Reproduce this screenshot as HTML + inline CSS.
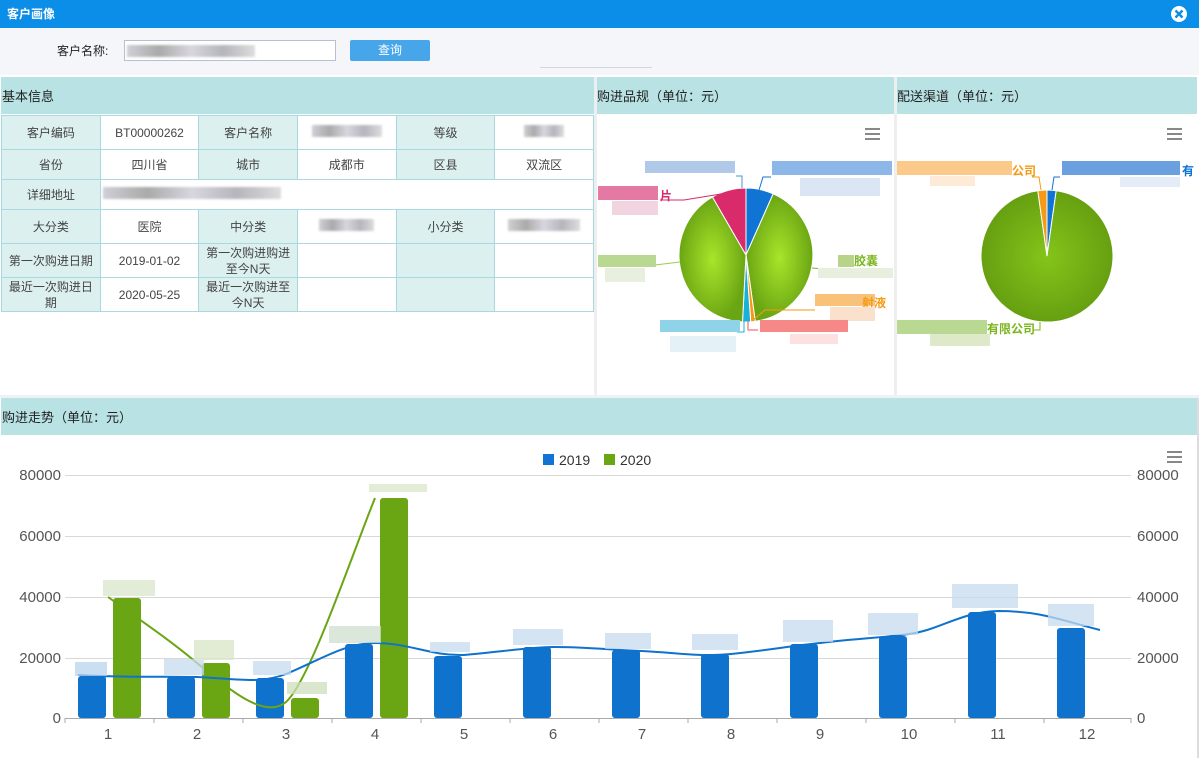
<!DOCTYPE html>
<html><head><meta charset="utf-8"><style>
*{margin:0;padding:0;box-sizing:border-box}
body{width:1199px;height:758px;overflow:hidden;background:#fff;font-family:"Liberation Sans","Noto Sans CJK SC",sans-serif;font-size:12px;color:#333;position:relative}
.abs{position:absolute}
.top{left:0;top:0;width:1199px;height:28px;background:#0b8ee8;color:#fff;font-weight:bold;font-size:12px;line-height:28px;padding-left:7px}
.search{left:0;top:28px;width:1199px;height:47px;background:#f5f6f9}
.hdr{background:#b8e2e3;height:37px;line-height:40px;font-size:13px;color:#222}
table{border-collapse:collapse;position:absolute;left:1px;top:115px;width:593px}
td{border:1px solid #a9d9e0;text-align:center;font-size:12px;color:#444;padding:0 2px;line-height:16px}
td.l{background:#ddf0f0;width:98px}
td.v{width:98px}
.blur{display:inline-block;background:linear-gradient(90deg,#cfcfd6,#aaa,#d8d6de,#b5b5bc,#ddd);filter:blur(1px);height:12px}
</style></head><body>
<div class="abs top">客户画像</div>
<svg class="abs" style="left:1170px;top:5px" width="18" height="18"><circle cx="9" cy="9" r="8" fill="#fff"/><path d="M5.5 5.5L12.5 12.5M12.5 5.5L5.5 12.5" stroke="#0b8ee8" stroke-width="2.4"/></svg>
<div class="abs search"></div>
<div class="abs" style="left:57px;top:42px;font-size:12px;color:#222">客户名称:</div>
<div class="abs" style="left:124px;top:40px;width:212px;height:21px;border:1px solid #b9bfd0;background:#fff"><span class="blur" style="width:128px;margin:4px 0 0 2px"></span></div>
<div class="abs" style="left:350px;top:40px;width:80px;height:21px;background:#47a6ea;border-radius:2px;color:#fff;text-align:center;line-height:21px">查询</div>
<div class="abs" style="left:540px;top:67px;width:112px;height:8px;border-top:1px solid #d4d6dc"></div>
<div class="abs hdr" style="left:1px;top:77px;width:593px;padding-left:1px">基本信息</div>
<div class="abs hdr" style="left:597px;top:77px;width:297px">购进品规（单位：元）</div>
<div class="abs hdr" style="left:897px;top:77px;width:300px">配送渠道（单位：元）</div>
<div class="abs" style="left:594px;top:77px;width:3px;height:320px;background:#eee"></div>
<div class="abs" style="left:894px;top:77px;width:3px;height:320px;background:#eee"></div>
<table>
<tr style="height:34px"><td class="l">客户编码</td><td class="v">BT00000262</td><td class="l">客户名称</td><td class="v" style="background:#fff"><span class="blur" style="width:70px"></span></td><td class="l">等级</td><td class="v"><span class="blur" style="width:40px"></span></td></tr>
<tr style="height:30px"><td class="l">省份</td><td>四川省</td><td class="l">城市</td><td>成都市</td><td class="l">区县</td><td>双流区</td></tr>
<tr style="height:30px"><td class="l">详细地址</td><td colspan="5" style="text-align:left"><span class="blur" style="width:178px"></span></td></tr>
<tr style="height:34px"><td class="l">大分类</td><td>医院</td><td class="l">中分类</td><td><span class="blur" style="width:55px"></span></td><td class="l">小分类</td><td><span class="blur" style="width:72px"></span></td></tr>
<tr style="height:34px"><td class="l">第一次购进日期</td><td>2019-01-02</td><td class="l">第一次购进购进至今N天</td><td></td><td class="l"></td><td></td></tr>
<tr style="height:34px"><td class="l">最近一次购进日期</td><td>2020-05-25</td><td class="l">最近一次购进至今N天</td><td></td><td class="l"></td><td></td></tr>
</table>
<svg class="abs" style="left:0;top:0" width="1199" height="400">
<defs>
<radialGradient id="g1" cx="0.5" cy="0.5" r="0.5"><stop offset="0" stop-color="#a8e52a"/><stop offset="1" stop-color="#6aa513"/></radialGradient>
<radialGradient id="g2" cx="0.5" cy="0.5" r="0.5"><stop offset="0" stop-color="#85c41a"/><stop offset="1" stop-color="#66a011"/></radialGradient>
</defs>
<g stroke="#fff" stroke-width="1">
<path d="M746 255L746 188A67 67 0 0 1 773.2 193.8Z" fill="#0f74d4"/>
<path d="M746 255L773.2 193.8A67 67 0 0 1 755.3 321.3Z" fill="url(#g1)"/>
<path d="M746 255L755.3 321.3A67 67 0 0 1 750.7 321.9Z" fill="#f59a14"/>
<path d="M746 255L750.7 321.9A67 67 0 0 1 742.5 321.9Z" fill="#1ab0d8"/>
<path d="M746 255L742.5 321.9A67 67 0 0 1 712.5 197Z" fill="url(#g1)"/>
<path d="M746 255L712.5 197A67 67 0 0 1 746 188Z" fill="#d92a6b"/>
<path d="M1047 256L1047 190A66 66 0 0 1 1056.2 190.7Z" fill="#0f74d4"/>
<path d="M1047 256L1056.2 190.7A66 66 0 1 1 1037.8 190.7Z" fill="url(#g2)"/>
<path d="M1047 256L1037.8 190.7A66 66 0 0 1 1047 190Z" fill="#f59a14"/>
</g>
<g fill="none" stroke-width="1">
<path d="M759 190L763 177H771" stroke="#0f74d4"/><path d="M742 188V176H736" stroke="#4a90d9"/>
<path d="M727 193L684 200H660" stroke="#d92a6b"/><path d="M812 268L838 270" stroke="#7ab51d"/>
<path d="M680 262L655 265" stroke="#9ccc4a"/><path d="M752 321L765 310H815" stroke="#f59a14"/>
<path d="M748 321V330H758" stroke="#f05050"/><path d="M744 321V332H737" stroke="#1ab0d8"/>
<path d="M1052 190L1054 177H1060" stroke="#0f74d4"/><path d="M1041 190L1039 177H1032" stroke="#f59a14"/>
<path d="M1040 322V330H1034" stroke="#7ab51d"/>
</g>
<g font-size="12" font-weight="bold">
<rect x="645" y="161" width="90" height="12" fill="#8fb2e0" opacity=".7"/><rect x="772" y="161" width="120" height="14" fill="#5c97e0" opacity=".7"/>
<rect x="800" y="178" width="80" height="18" fill="#dbe6f5"/>
<rect x="598" y="186" width="60" height="14" fill="#e47aa3"/><text x="660" y="200" fill="#d92a6b">片</text>
<rect x="612" y="201" width="46" height="14" fill="#f2d4e0"/>
<rect x="598" y="255" width="58" height="12" fill="#b9d892"/><rect x="605" y="268" width="40" height="14" fill="#e8efde"/>
<rect x="838" y="255" width="16" height="12" fill="#b8d48a"/><text x="854" y="265" fill="#7ab51d">胶囊</text>
<rect x="818" y="268" width="75" height="10" fill="#e8efde"/>
<rect x="815" y="294" width="60" height="12" fill="#f8c27a"/><text x="862" y="307" fill="#f59a14">射液</text>
<rect x="830" y="307" width="45" height="14" fill="#fbe0cc"/>
<rect x="760" y="320" width="88" height="12" fill="#f68888"/><rect x="790" y="334" width="48" height="10" fill="#fde0e0"/>
<rect x="660" y="320" width="80" height="12" fill="#8fd3e8"/><rect x="670" y="336" width="66" height="16" fill="#e4f2f8"/>
<rect x="897" y="161" width="115" height="14" fill="#fbc98a"/><text x="1012" y="175" fill="#f59a14">公司</text>
<rect x="930" y="176" width="45" height="10" fill="#fdebd8"/>
<rect x="1062" y="161" width="118" height="14" fill="#6aa0e0"/><text x="1182" y="175" fill="#0f74d4">有</text>
<rect x="1120" y="177" width="60" height="10" fill="#e3ecf7"/>
<rect x="897" y="320" width="90" height="14" fill="#b9d892"/><text x="987" y="333" fill="#7ab51d">有限公司</text>
<rect x="930" y="334" width="60" height="12" fill="#dde9c8"/>
</g>
<g fill="#888"><rect x="865" y="128" width="15" height="2"/><rect x="865" y="133" width="15" height="2"/><rect x="865" y="138" width="15" height="2"/>
<rect x="1167" y="128" width="15" height="2"/><rect x="1167" y="133" width="15" height="2"/><rect x="1167" y="138" width="15" height="2"/></g>
</svg>
<div class="abs" style="left:0;top:395px;width:1199px;height:3px;background:#eef2f4"></div>
<div class="abs hdr" style="left:1px;top:398px;width:1196px;padding-left:1px">购进走势（单位：元）</div>
<div class="abs" style="left:1197px;top:398px;width:2px;height:360px;background:#ddd"></div>
<svg class="abs" style="left:0;top:435px" width="1199" height="323">
<g transform="translate(0,-435)">
<rect x="543" y="454" width="11" height="11" fill="#0f74d4"/><text x="559" y="465" font-size="14" fill="#333">2019</text>
<rect x="604" y="454" width="11" height="11" fill="#6aa513"/><text x="620" y="465" font-size="14" fill="#333">2020</text>
<g fill="#888"><rect x="1167" y="451" width="15" height="2"/><rect x="1167" y="456" width="15" height="2"/><rect x="1167" y="461" width="15" height="2"/></g>
<g stroke="#d8d8d8" stroke-width="1"><path d="M65 475.5H1131M65 536.5H1131M65 597.5H1131M65 658.5H1131"/></g>
<path d="M65 718.5H1131" stroke="#aaa"/>
<g stroke="#aaa"><path d="M65 718V723M154 718V723M243 718V723M332 718V723M421 718V723M510 718V723M599 718V723M688 718V723M777 718V723M866 718V723M955 718V723M1044 718V723M1131 718V723"/></g>
<g font-size="15" fill="#555" text-anchor="end"><text x="61" y="480">80000</text><text x="61" y="541">60000</text><text x="61" y="602">40000</text><text x="61" y="663">20000</text><text x="61" y="723">0</text></g>
<g font-size="15" fill="#555"><text x="1137" y="480">80000</text><text x="1137" y="541">60000</text><text x="1137" y="602">40000</text><text x="1137" y="663">20000</text><text x="1137" y="723">0</text></g>
<g font-size="15" fill="#555" text-anchor="middle"><text x="108" y="739">1</text><text x="197" y="739">2</text><text x="286" y="739">3</text><text x="375" y="739">4</text><text x="464" y="739">5</text><text x="553" y="739">6</text><text x="642" y="739">7</text><text x="731" y="739">8</text><text x="820" y="739">9</text><text x="909" y="739">10</text><text x="998" y="739">11</text><text x="1087" y="739">12</text></g>
<g fill="#0f72cc">
<rect x="78" y="676" width="28" height="42" rx="3"/><rect x="167" y="677" width="28" height="41" rx="3"/><rect x="256" y="678" width="28" height="40" rx="3"/><rect x="345" y="644" width="28" height="74" rx="3"/>
<rect x="434" y="656" width="28" height="62" rx="3"/><rect x="523" y="647" width="28" height="71" rx="3"/><rect x="612" y="650" width="28" height="68" rx="3"/><rect x="701" y="654" width="28" height="64" rx="3"/>
<rect x="790" y="644" width="28" height="74" rx="3"/><rect x="879" y="636" width="28" height="82" rx="3"/><rect x="968" y="612" width="28" height="106" rx="3"/><rect x="1057" y="628" width="28" height="90" rx="3"/>
</g>
<g fill="#6aa513">
<rect x="113" y="598" width="28" height="120" rx="3"/><rect x="202" y="663" width="28" height="55" rx="3"/><rect x="291" y="698" width="28" height="20" rx="3"/><rect x="380" y="498" width="28" height="220" rx="3"/>
</g>
<path d="M108 597C140 620 170 640 197 663C230 690 265 720 286 702C310 680 350 560 375 498" fill="none" stroke="#6aa513" stroke-width="2"/>
<path d="M78 675C130 678 150 676 197 677C240 679 260 684 286 674C320 660 345 643 375 643C410 643 430 656 464 655C500 652 530 647 553 647C590 647 610 650 642 651C680 653 700 657 731 654C770 650 790 646 820 643C860 638 880 638 909 634C940 630 960 612 998 611C1040 611 1060 620 1100 630" fill="none" stroke="#0f72cc" stroke-width="2"/>
<g opacity=".75">
<rect x="75" y="662" width="32" height="14" fill="#b9d4ee"/><rect x="103" y="580" width="52" height="16" fill="#d9e6c8"/>
<rect x="164" y="659" width="40" height="16" fill="#c6dbef"/><rect x="194" y="640" width="40" height="20" fill="#d9e6c8"/>
<rect x="253" y="661" width="38" height="14" fill="#c6dbef"/><rect x="287" y="682" width="40" height="12" fill="#cfe0bb"/>
<rect x="329" y="626" width="52" height="17" fill="#d0dfd0"/><rect x="369" y="484" width="58" height="8" fill="#d9e6c8"/>
<rect x="430" y="642" width="40" height="10" fill="#c6dbef"/><rect x="513" y="629" width="50" height="16" fill="#c6dbef"/>
<rect x="605" y="633" width="46" height="16" fill="#c6dbef"/><rect x="692" y="634" width="46" height="16" fill="#c6dbef"/>
<rect x="783" y="620" width="50" height="22" fill="#c6dbef"/><rect x="868" y="613" width="50" height="22" fill="#c6dbef"/>
<rect x="952" y="584" width="66" height="24" fill="#c6dbef"/><rect x="1048" y="604" width="46" height="22" fill="#c6dbef"/>
</g>
</g>
</svg>
</body></html>
